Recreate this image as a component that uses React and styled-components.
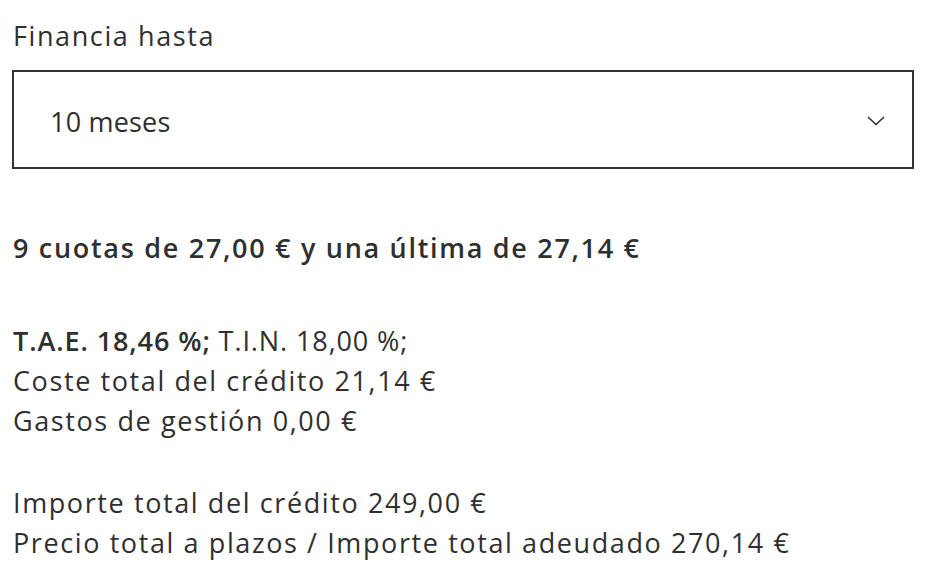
import React from "react";
import styled, { createGlobalStyle } from "styled-components";

const Global = createGlobalStyle`
  html, body { margin: 0; padding: 0; background: #fff; }
  body {
    font-family: "Open Sans", "Noto Sans", sans-serif;
    color: #2f2f2f;
    -webkit-font-smoothing: antialiased;
  }
`;

const Page = styled.div`
  width: 902px;
  padding: 16px 26px 0 12px;
  font-size: 27px;
  line-height: 40px;
  letter-spacing: 1.6px;
`;

const Label = styled.div`
  margin: 0 0 14px 1px;
`;

const Select = styled.div`
  box-sizing: border-box;
  height: 99px;
  border: 2px solid #333;
  display: flex;
  align-items: center;
  justify-content: space-between;
  padding: 4px 27px 0 36px;
`;

const Value = styled.span`
  letter-spacing: 0.2px;
`;

const Chevron = styled.svg`
  width: 18px;
  height: 10px;
  display: block;
  margin-top: -2px;
`;

const Heading = styled.div`
  margin: 59px 0 0 1px;
  font-weight: 600;
  letter-spacing: 1.7px;
`;

const Block = styled.div`
  margin: ${(p) => p.$top}px 0 0 1px;
`;

const Line = styled.div`
  letter-spacing: ${(p) => (p.$tight ? "0.9px" : "inherit")};
`;

const Strong = styled.span`
  font-weight: 600;
`;

export default function App() {
  return (
    <>
      <Global />
      <Page>
        <Label>Financia hasta</Label>
        <Select>
          <Value>10 meses</Value>
          <Chevron viewBox="0 0 18 10" fill="none">
            <path d="M1.5 1.5l7.5 7 7.5-7" stroke="#333" strokeWidth="1.7" strokeLinecap="round" strokeLinejoin="round" />
          </Chevron>
        </Select>
        <Heading>9 cuotas de 27,00 € y una última de 27,14 €</Heading>
        <Block $top={53}>
          <Line $tight>
            <Strong>T.A.E. 18,46 %;</Strong> T.I.N. 18,00 %;
          </Line>
          <Line>Coste total del crédito 21,14 €</Line>
          <Line>Gastos de gestión 0,00 €</Line>
        </Block>
        <Block $top={42}>
          <Line>Importe total del crédito 249,00 €</Line>
          <Line>Precio total a plazos / Importe total adeudado 270,14 €</Line>
        </Block>
      </Page>
    </>
  );
}
